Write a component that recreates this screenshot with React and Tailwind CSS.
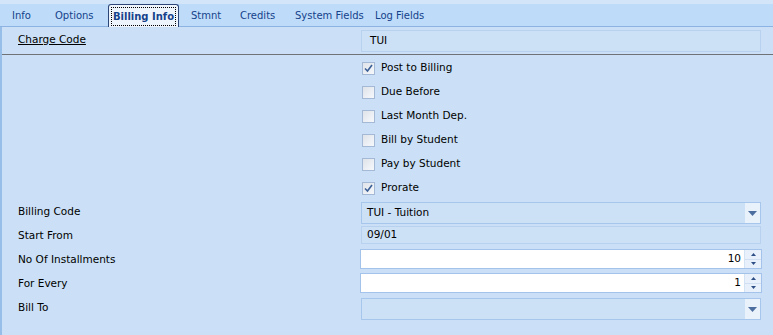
import React from 'react';

const tabs = [
  { name: 'Info', cls: 'w-[43px] pl-[8px]' },
  { name: 'Options', cls: 'w-[61px] pl-[8px]' },
  { name: 'Billing Info', active: true },
  { name: 'Stmnt', cls: 'w-[49px] pl-[12px]' },
  { name: 'Credits', cls: 'w-[55px] pl-[12px]' },
  { name: 'System Fields', cls: 'w-[80px] pl-[12px]' },
  { name: 'Log Fields', cls: 'w-[80px] pl-[12px]' },
];

const checks = [
  { label: 'Post to Billing', on: true },
  { label: 'Due Before' },
  { label: 'Last Month Dep.' },
  { label: 'Bill by Student' },
  { label: 'Pay by Student' },
  { label: 'Prorate', on: true },
];

function CheckBox({ on }) {
  return (
    <div className="w-[13px] h-[13px] border border-[#a4b9d6] bg-gradient-to-br from-[#dfe4ea] to-[#f6f8fb] flex items-center justify-center">
      {on && (
        <svg width="9" height="9" viewBox="0 0 9 9">
          <path d="M1 4.5 L3.5 7 L8 1" fill="none" stroke="#3b5f96" strokeWidth="1.6" />
        </svg>
      )}
    </div>
  );
}

function DropBtn() {
  return (
    <div className="w-[15px] h-full bg-[#e9f2fb] flex items-center justify-center">
      <svg width="9" height="5" viewBox="0 0 9 5">
        <path d="M0 0 H9 L4.5 5 Z" fill="#4d6f9f" />
      </svg>
    </div>
  );
}

function Spinner() {
  return (
    <div className="w-[17px] h-full flex flex-col border-l border-[#d4e3f4]">
      <div className="flex-1 bg-[#e8f1fb] flex items-center justify-center border-b border-[#d0e0f2]">
        <svg width="5" height="3" viewBox="0 0 5 3"><path d="M0 3 H5 L2.5 0 Z" fill="#2d4f86" /></svg>
      </div>
      <div className="flex-1 bg-[#e8f1fb] flex items-center justify-center">
        <svg width="5" height="3" viewBox="0 0 5 3"><path d="M0 0 H5 L2.5 3 Z" fill="#2d4f86" /></svg>
      </div>
    </div>
  );
}

function Row({ label, children, labelTop = 'mt-[5px]' }) {
  return (
    <div className="flex h-[24px]">
      <div className={`w-[359px] pl-[16px] ${labelTop} leading-[13px] text-black`}>{label}</div>
      {children}
    </div>
  );
}

export default function App() {
  return (
    <div className="w-[773px] h-[335px] bg-[#cbe0f6] overflow-hidden text-[10.5px]" style={{ fontFamily: '"DejaVu Sans", Verdana, sans-serif' }}>
      <div className="h-[27px] bg-[#d3e6f9] pt-[4px] text-[10px]">
        <div className="h-[23px] bg-[#bedcf9] border-b border-[#8db3e3] flex items-stretch pl-[4px]">
          {tabs.map((t) =>
            t.active ? (
              <div key={t.name} className="w-[71px] -mb-px h-[23px] bg-[#eef4fb] border border-[#2c4677] border-b-0 rounded-t-[3px] p-[2px] pb-[1px]">
                <div className="h-full border border-dotted border-black flex items-center justify-center font-bold text-[#15428b] whitespace-nowrap">
                  {t.name}
                </div>
              </div>
            ) : (
              <div key={t.name} className={`${t.cls} flex items-center text-[#15428b] whitespace-nowrap`}>
                {t.name}
              </div>
            )
          )}
        </div>
      </div>
      <div className="border-l-2 border-[#97bde9] h-[308px]">
        <div className="flex h-[28px] border-b border-[#6f7378]">
          <div className="w-[359px] pl-[16px] pt-[6px] leading-[13px] underline text-black">Charge Code</div>
          <div className="mt-[3px] w-[400px] h-[22px] border border-[#b8d1ef] bg-[#cde1f6] pl-[8px] flex items-center">TUI</div>
        </div>
        <div className="flex flex-col pl-[360px] pt-[1px]">
          {checks.map((c) => (
            <div key={c.label} className="h-[24px] flex items-center gap-[6px]">
              <CheckBox on={c.on} />
              <span className="text-black">{c.label}</span>
            </div>
          ))}
        </div>
        <div>
          <Row label="Billing Code">
            <div className="mt-[2px] w-[400px] h-[22px] border border-[#a7c6ec] bg-[#cce0f6] flex items-center justify-between">
              <span className="pl-[5px]">TUI - Tuition</span>
              <DropBtn />
            </div>
          </Row>
          <Row label="Start From">
            <div className="mt-[2px] w-[400px] h-[18px] border border-[#b8d1ef] bg-[#cde1f6] pl-[5px] flex items-center">09/01</div>
          </Row>
          <Row label="No Of Installments">
            <div className="mt-[1px] -ml-px w-[402px] h-[20px] border border-[#a3c3ea] bg-white flex items-center justify-end">
              <span className="pr-[3px]">10</span>
              <Spinner />
            </div>
          </Row>
          <Row label="For Every">
            <div className="mt-[1px] -ml-px w-[402px] h-[20px] border border-[#a3c3ea] bg-white flex items-center justify-end">
              <span className="pr-[3px]">1</span>
              <Spinner />
            </div>
          </Row>
          <Row label="Bill To">
            <div className="mt-[2px] w-[400px] h-[22px] border border-[#a7c6ec] bg-[#cce0f6] flex items-center justify-end">
              <DropBtn />
            </div>
          </Row>
        </div>
      </div>
    </div>
  );
}
